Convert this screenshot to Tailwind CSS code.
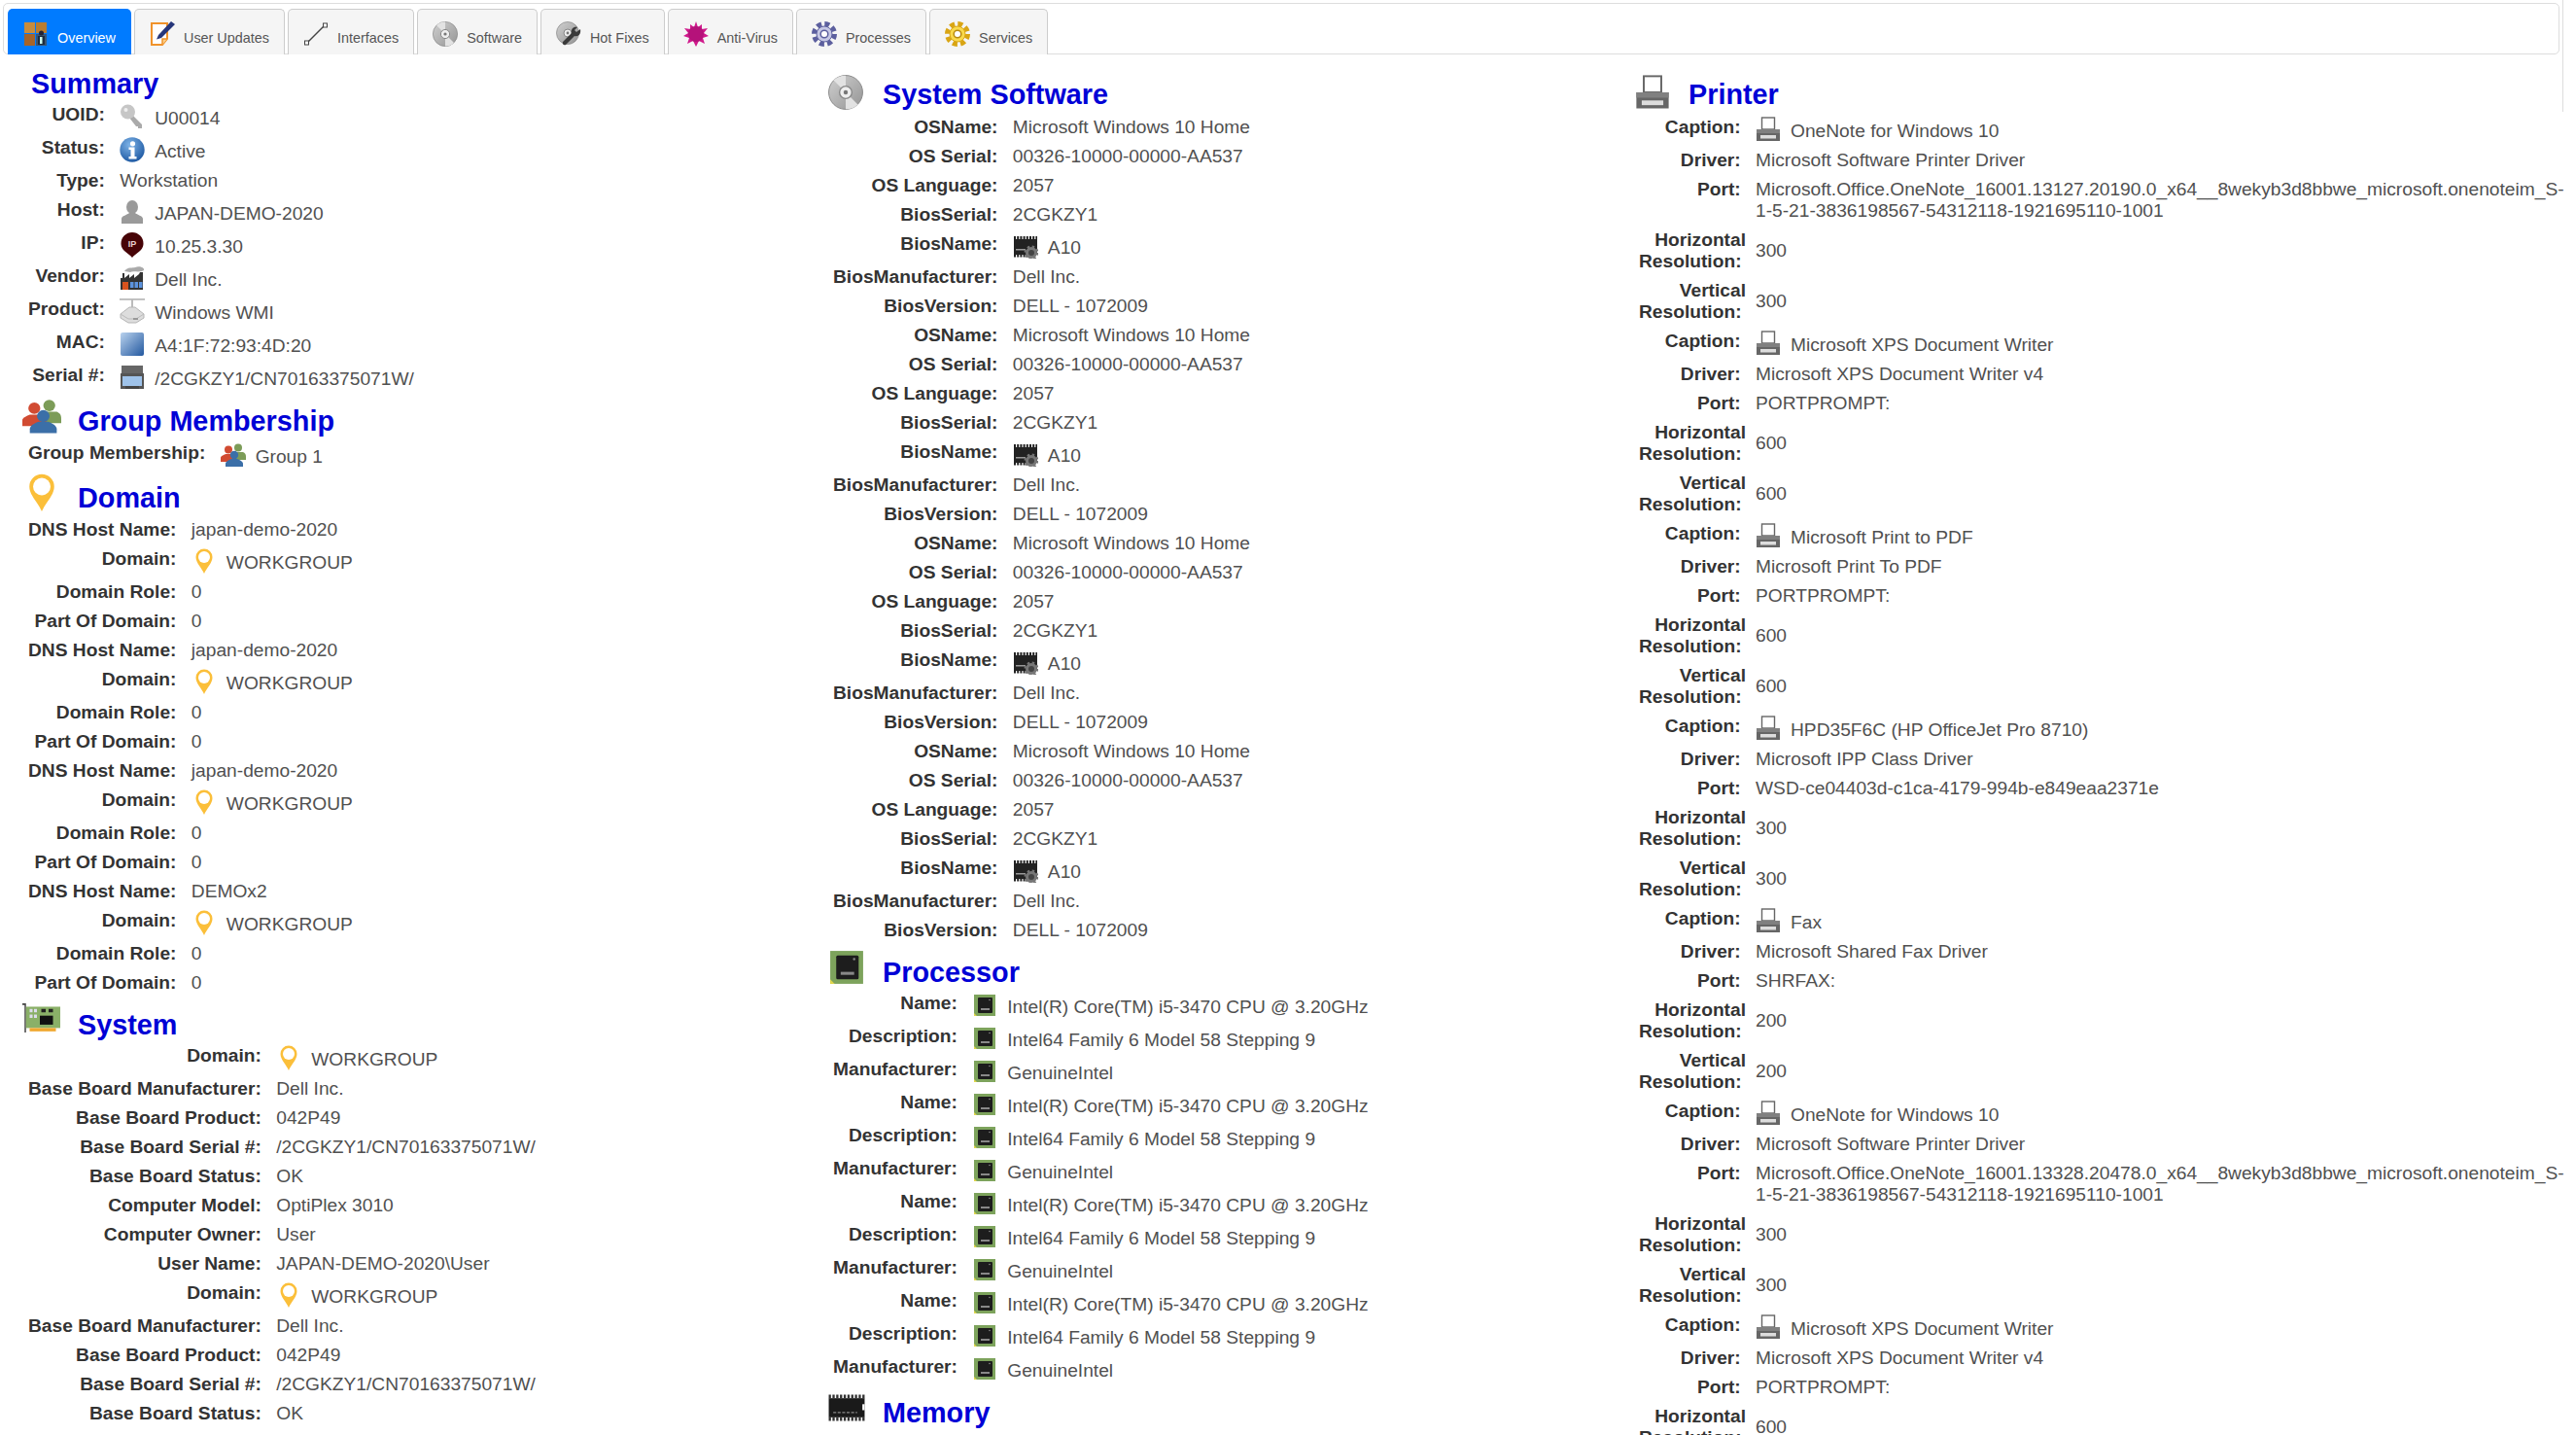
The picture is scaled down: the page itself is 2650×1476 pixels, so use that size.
<!DOCTYPE html>
<html lang="en">
<head>
  <meta charset="UTF-8" />
  <meta name="viewport" content="width=device-width, initial-scale=1.0" />
  <title>Device Overview</title>
  <script src="https://cdn.jsdelivr.net/npm/@tailwindcss/browser@4"></script>
</head>
<body class="bg-white h-screen overflow-hidden font-['Liberation_Sans',Arial,sans-serif] text-[19.2px] leading-[22px] text-[#505050]">
  <!-- icon sheet -->
  <svg class="absolute w-0 h-0" xmlns="http://www.w3.org/2000/svg">
    <defs>
      <radialGradient id="infoFill" cx="40%" cy="30%" r="80%"><stop offset="0" stop-color="#7fb4e8"/><stop offset="1" stop-color="#14509c"/></radialGradient>
      <linearGradient id="macFill" x1="0" y1="0" x2="1" y2="1"><stop offset="0" stop-color="#b9d2ee"/><stop offset="1" stop-color="#23589f"/></linearGradient>
      <linearGradient id="discFill" x1="0" y1="0" x2="1" y2="1"><stop offset="0" stop-color="#d0d0d0"/><stop offset="1" stop-color="#949494"/></linearGradient>
    </defs>
    <symbol id="key" viewBox="0 0 26 26">
      <path d="M14 12 L23 21 V25 H19 V23 H17 L10 14" fill="#aaa"/>
      <circle cx="8.5" cy="8" r="7.5" fill="#c6c6c6"/><circle cx="6.5" cy="6" r="2" fill="#eee"/>
    </symbol>
    <symbol id="info" viewBox="0 0 26 26">
      <circle cx="13" cy="13" r="12.7" fill="url(#infoFill)"/>
      <circle cx="13.5" cy="6.8" r="2.6" fill="#fff"/>
      <path d="M9.5 10.5H15.5V20H17.5V22.5H9.5V20H11.5V13H9.5Z" fill="#fff"/>
    </symbol>
    <symbol id="user" viewBox="0 0 26 26">
      <ellipse cx="13" cy="8" rx="6" ry="7" fill="#9a9a9a"/>
      <path d="M2 25V20C2 17 8 16 10 14H16C18 16 24 17 24 20V25Z" fill="#9a9a9a"/>
    </symbol>
    <symbol id="ip" viewBox="0 0 26 26">
      <path d="M13 26C9 21 1.5 19 1.5 11.5A11.5 11.5 0 0 1 24.5 11.5C24.5 19 17 21 13 26Z" fill="#470407"/>
      <text x="13" y="14.5" text-anchor="middle" font-size="9" font-weight="700" fill="#e8d0d0" font-family="Liberation Sans">IP</text>
    </symbol>
    <symbol id="factory" viewBox="0 0 26 26">
      <path d="M5 6C8 1 14 3 16 2C20 0 26 2 25 5C20 8 14 5 11 7Z" fill="#aaa"/>
      <path d="M3 8H5V13L10 9V13L15 9V13L20 9L21 7H24V25H1V13H3Z" fill="#333"/>
      <rect x="3" y="17" width="6" height="8" fill="#d9531e"/><rect x="11" y="17" width="3.5" height="6" fill="#5c93de"/><rect x="15.5" y="17" width="3.5" height="6" fill="#5c93de"/><rect x="20" y="17" width="3.5" height="6" fill="#5c93de"/>
    </symbol>
    <symbol id="device" viewBox="0 0 26 26">
      <rect x="0" y="0" width="26" height="1.8" fill="#bbb"/><rect x="12" y="1" width="2" height="9" fill="#bbb"/>
      <path d="M1 16L10 9H16L25 16V20L17 25H9L1 20Z" fill="#ddd" stroke="#b5b5b5"/>
      <path d="M1 16L9 21H17L25 16" fill="none" stroke="#bbb"/><rect x="14" y="20" width="5" height="2" fill="#999"/>
    </symbol>
    <symbol id="mac" viewBox="0 0 26 26"><rect x="1" y="1" width="24" height="24" rx="2" fill="url(#macFill)"/></symbol>
    <symbol id="serial" viewBox="0 0 26 26">
      <path d="M2 1H24V12H2Z" fill="#666"/><rect x="1" y="9" width="24" height="16" fill="#555"/>
      <rect x="3" y="12" width="20" height="10" fill="#9fc3ea"/><rect x="6" y="22" width="14" height="3" fill="#444"/>
    </symbol>
    <symbol id="group" viewBox="0 0 26 26" preserveAspectRatio="none">
      <circle cx="18" cy="5.5" r="4" fill="#7c9c58"/><path d="M13 15V10H23C25 11 26 12 26 15V18H17Z" fill="#7c9c58"/>
      <circle cx="8" cy="7.5" r="4" fill="#d14b32"/><path d="M0 20V16C0 14 3 13 5 12H12C14 13 16 14 16 16V20Z" fill="#d14b32"/>
      <circle cx="14" cy="13" r="4.2" fill="#3b6fa8"/><path d="M5 25V22C5 20 8 18 11 17H17C20 18 23 20 23 22V25Z" fill="#3b6fa8"/>
    </symbol>
    <symbol id="pin" viewBox="0 0 26 26">
      <path d="M13 26C10.5 20 4.5 15 4.5 9A8.5 8.5 0 0 1 21.5 9C21.5 15 15.5 20 13 26Z" fill="#fbbf3a"/>
      <circle cx="13" cy="9" r="6" fill="#fff"/>
    </symbol>
    <symbol id="biosChip" viewBox="0 0 26 26">
      <path d="M1 6H25V22H1Z" fill="#222"/>
      <path d="M1 4.5H25" stroke="#222" stroke-width="3" stroke-dasharray="2 1.2"/>
      <path d="M1 23H17" stroke="#222" stroke-width="3" stroke-dasharray="2 1.2"/>
      <rect x="3" y="16" width="10" height="1.5" fill="#999"/>
      <circle cx="19" cy="20" r="4.5" fill="#444" stroke="#777" stroke-width="3"/>
      <circle cx="19" cy="20" r="6.5" fill="none" stroke="#777" stroke-width="2" stroke-dasharray="2.5 2.6"/>
    </symbol>
    <symbol id="cpu" viewBox="0 0 26 26">
      <rect x="2" y="2" width="22" height="22" fill="#7da35c"/>
      <rect x="6" y="5" width="15" height="16" rx="1" fill="#1d1d1d"/>
      <rect x="9" y="16" width="9" height="2" fill="#888"/><circle cx="18" cy="7.5" r="0.8" fill="#888"/>
      <path d="M2 24L2 21L5 24Z" fill="#e0d64b"/>
    </symbol>
    <symbol id="printer" viewBox="0 0 26 26">
      <rect x="6.5" y="1" width="13" height="12" fill="#fff" stroke="#666" stroke-width="1.4"/>
      <path d="M1 13H25V25H1Z" fill="#666"/><path d="M1 13H25V17H1Z" fill="#808080"/>
      <rect x="5" y="19" width="16" height="3.5" fill="#ddd"/>
    </symbol>
    <symbol id="memory" viewBox="0 0 26 26" preserveAspectRatio="none">
      <rect x="1" y="5" width="24" height="16" fill="#1a1a1a"/>
      <path d="M1 3.5H25M1 22.5H25" stroke="#333" stroke-width="3" stroke-dasharray="1.5 1"/>
      <path d="M4 17H20" stroke="#888" stroke-width="1" stroke-dasharray="2 1"/>
      <path d="M25 10V15H23.5V10Z" fill="#fff"/>
    </symbol>
    <symbol id="disc" viewBox="0 0 26 26">
      <circle cx="13" cy="13" r="12.6" fill="url(#discFill)" stroke="#888" stroke-width=".7"/>
      <path d="M13 13L4 4A12.6 12.6 0 0 1 13 .5Z" fill="#e2e2e2"/><path d="M13 13L22 22A12.6 12.6 0 0 1 13 25.5Z" fill="#e2e2e2"/>
      <circle cx="13" cy="13" r="4.6" fill="#eee" stroke="#888"/><circle cx="13" cy="13" r="1.6" fill="#777"/>
    </symbol>
    <symbol id="board" viewBox="0 0 26 26" preserveAspectRatio="none">
      <path d="M0 0H2.5V26H1.5V1.5H0Z" fill="#444"/>
      <rect x="2.5" y="3" width="23.5" height="19" fill="#8ab068"/>
      <rect x="5" y="5" width="2" height="3" fill="#dde"/><rect x="5" y="10" width="2" height="3" fill="#dde"/><rect x="8" y="5" width="2" height="3" fill="#dde"/><rect x="8" y="10" width="2" height="3" fill="#dde"/>
      <rect x="13" y="5" width="3" height="3" fill="#222"/><rect x="18" y="5" width="3" height="3" fill="#222"/><rect x="12" y="11" width="9" height="8" fill="#111"/>
      <rect x="5" y="22" width="18" height="3" fill="#f0a830"/>
    </symbol>
    <symbol id="boxes" viewBox="0 0 26 26">
      <rect x="1" y="1" width="11" height="11" fill="#c88c3c"/><rect x="13" y="1" width="11" height="11" fill="#b97d30"/>
      <rect x="1" y="13" width="11" height="12" fill="#a5642a"/><rect x="13" y="13" width="11" height="12" fill="#3a5674"/>
      <circle cx="18.5" cy="12" r="2.5" fill="#223"/><rect x="15" y="15" width="7" height="9" fill="#1c2c40"/><rect x="17" y="16" width="2.5" height="7" fill="#cfe"/>
    </symbol>
    <symbol id="pen" viewBox="0 0 26 26">
      <path d="M2 2H18V18L13 24H2Z" fill="#fff" stroke="#f0932b" stroke-width="2"/>
      <path d="M13 24V18H18" fill="#fbd089" stroke="#f0932b" stroke-width="1.5"/>
      <path d="M22 0L26 3L12 17L7 18.5L9 14Z" fill="#26367a"/>
    </symbol>
    <symbol id="link" viewBox="0 0 26 26">
      <path d="M5 21L21 5" stroke="#444" stroke-width="1.5"/>
      <rect x="1.5" y="20" width="4" height="4" fill="#fff" stroke="#444"/><rect x="20.5" y="2" width="4" height="4" fill="#fff" stroke="#444"/>
    </symbol>
    <symbol id="discWrench" viewBox="0 0 26 26">
      <circle cx="12" cy="12" r="11.5" fill="url(#discFill)" stroke="#888" stroke-width=".7"/>
      <circle cx="12" cy="12" r="4" fill="#eee" stroke="#888"/><circle cx="12" cy="12" r="1.4" fill="#777"/>
      <path d="M25 8L21 11L19 9L22 6C18 5 15 8 16 12L7 21C6 23 8 25 10 24L19 15C23 16 26 13 25 8Z" fill="#3a3a3a"/>
    </symbol>
    <symbol id="virus" viewBox="0 0 26 26">
      <path d="M13 0L15 6L19 3L19 8L25 7L21 12L26 15L20 17L22 23L16 20L13 26L10 20L4 23L6 17L0 15L5 12L1 7L7 8L7 3L11 6Z" fill="#d01a8c"/>
      <circle cx="13" cy="13" r="8" fill="#b5127a"/>
    </symbol>
    <symbol id="gearBlue" viewBox="0 0 26 26">
      <circle cx="13" cy="13" r="10.5" fill="none" stroke="#5c5f9e" stroke-width="5" stroke-dasharray="5 3.25"/>
      <circle cx="13" cy="13" r="8" fill="#c5c7e4" stroke="#5c5f9e" stroke-width="1"/>
      <circle cx="13" cy="13" r="3.8" fill="#fff" stroke="#5c5f9e" stroke-width="1.5"/>
    </symbol>
    <symbol id="gearGold" viewBox="0 0 26 26">
      <circle cx="13" cy="13" r="10.5" fill="none" stroke="#d9a514" stroke-width="5" stroke-dasharray="5 3.25"/>
      <circle cx="13" cy="13" r="8" fill="#f9d94c" stroke="#d9a514" stroke-width="1"/>
      <circle cx="13" cy="13" r="3.8" fill="#fff" stroke="#b88a10" stroke-width="1.5"/>
    </symbol>
  </svg>

  <div class="absolute left-[2636px] top-0 h-[115px] w-px bg-[#ddd]"></div>

  <nav class="ml-[3px] mt-[3px] w-[2630px] h-[53px] border border-[#ddd] rounded-[5px] pt-[5px] pl-[4px] flex gap-[3px] text-[14.4px] text-[#555]">
    <a class="h-[47px] flex pl-[16px] pr-[16px] rounded-t-[5px] bg-[#007bff] text-white"><svg class="w-[26px] h-[26px] mt-[13px] mr-[9px]"><use href="#boxes"/></svg><span class="pt-[19px]">Overview</span></a>
    <a class="h-[47px] flex pl-[15px] pr-[15px] rounded-t-[5px] bg-[#f5f5f5] border border-b-0 border-[#ccc]"><svg class="w-[26px] h-[26px] mt-[12px] mr-[9px]"><use href="#pen"/></svg><span class="pt-[18px]">User Updates</span></a>
    <a class="h-[47px] flex pl-[15px] pr-[15px] rounded-t-[5px] bg-[#f5f5f5] border border-b-0 border-[#ccc]"><svg class="w-[26px] h-[26px] mt-[12px] mr-[9px]"><use href="#link"/></svg><span class="pt-[18px]">Interfaces</span></a>
    <a class="h-[47px] flex pl-[15px] pr-[15px] rounded-t-[5px] bg-[#f5f5f5] border border-b-0 border-[#ccc]"><svg class="w-[26px] h-[26px] mt-[12px] mr-[9px]"><use href="#disc"/></svg><span class="pt-[18px]">Software</span></a>
    <a class="h-[47px] flex pl-[15px] pr-[15px] rounded-t-[5px] bg-[#f5f5f5] border border-b-0 border-[#ccc]"><svg class="w-[26px] h-[26px] mt-[12px] mr-[9px]"><use href="#discWrench"/></svg><span class="pt-[18px]">Hot Fixes</span></a>
    <a class="h-[47px] flex pl-[15px] pr-[15px] rounded-t-[5px] bg-[#f5f5f5] border border-b-0 border-[#ccc]"><svg class="w-[26px] h-[26px] mt-[12px] mr-[9px]"><use href="#virus"/></svg><span class="pt-[18px]">Anti-Virus</span></a>
    <a class="h-[47px] flex pl-[15px] pr-[15px] rounded-t-[5px] bg-[#f5f5f5] border border-b-0 border-[#ccc]"><svg class="w-[26px] h-[26px] mt-[12px] mr-[9px]"><use href="#gearBlue"/></svg><span class="pt-[18px]">Processes</span></a>
    <a class="h-[47px] flex pl-[15px] pr-[15px] rounded-t-[5px] bg-[#f5f5f5] border border-b-0 border-[#ccc]"><svg class="w-[26px] h-[26px] mt-[12px] mr-[9px]"><use href="#gearGold"/></svg><span class="pt-[18px]">Services</span></a>
  </nav>

  <main class="grid grid-cols-[828px_830px_1fr] pl-[23px]">
    <div id="col1"></div>
    <div id="col2"></div>
    <div id="col3"></div>
  </main>

  <script>
    const heading = (title, icon, box, pad) => `
      <div class="flex items-center ${pad}">
        ${icon ? `<svg class="${box} shrink-0"><use href="#${icon}"/></svg>` : ''}
        <h2 class="font-bold text-[28.8px] leading-[34px] text-[#0000d6]">${title}</h2>
      </div>`;

    const row = ([label, value, icon]) => {
      if (icon) {
        return `<tr class="h-[34px]">
          <td class="align-top text-right font-bold text-[#333] pt-[5px] pb-[3px] pr-[10px]">${label}:&nbsp;</td>
          <td class="align-top p-0"><div class="flex"><svg class="w-[26px] h-[26px] mt-[5px] mr-[10px] shrink-0"><use href="#${icon}"/></svg><span class="mt-[9px]">${value}</span></div></td>
        </tr>`;
      }
      return `<tr>
        <td class="align-top text-right font-bold text-[#333] pt-[5px] pb-[3px] pr-[10px]">${label}:&nbsp;</td>
        <td class="align-middle pt-[5px] pb-[3px]">${value}</td>
      </tr>`;
    };

    const table = (rows) => `<table class="ml-[6px] whitespace-nowrap border-collapse"><tbody>${rows.map(row).join('')}</tbody></table>`;

    const printerTable = (rows) => `<table class="ml-[5px] w-[956px] table-fixed border-collapse"><colgroup><col class="w-[120px]"></colgroup><tbody>${rows.map(row).join('')}</tbody></table>`;

    const repeat = (rows, n) => Array.from({ length: n }).flatMap(() => rows);

    const domainRows = (host) => [
      ['DNS Host Name', host],
      ['Domain', 'WORKGROUP', 'pin'],
      ['Domain Role', '0'],
      ['Part Of Domain', '0'],
    ];

    const boardRows = [
      ['Domain', 'WORKGROUP', 'pin'],
      ['Base Board Manufacturer', 'Dell Inc.'],
      ['Base Board Product', '042P49'],
      ['Base Board Serial #', '/2CGKZY1/CN70163375071W/'],
      ['Base Board Status', 'OK'],
    ];

    const softwareRows = [
      ['OSName', 'Microsoft Windows 10 Home'],
      ['OS Serial', '00326-10000-00000-AA537'],
      ['OS Language', '2057'],
      ['BiosSerial', '2CGKZY1'],
      ['BiosName', 'A10', 'biosChip'],
      ['BiosManufacturer', 'Dell Inc.'],
      ['BiosVersion', 'DELL - 1072009'],
    ];

    const cpuRows = [
      ['Name', 'Intel(R) Core(TM) i5-3470 CPU @ 3.20GHz', 'cpu'],
      ['Description', 'Intel64 Family 6 Model 58 Stepping 9', 'cpu'],
      ['Manufacturer', 'GenuineIntel', 'cpu'],
    ];

    const printerRows = (caption, driver, port, h, v) => [
      ['Caption', caption, 'printer'],
      ['Driver', driver],
      ['Port', port],
      ['Horizontal Resolution', h],
      ['Vertical Resolution', v],
    ];

    document.getElementById('col1').innerHTML =
      heading('Summary', null, '', 'h-[46px] pt-[14px] pl-[9px]') +
      table([
        ['UOID', 'U00014', 'key'],
        ['Status', 'Active', 'info'],
        ['Type', 'Workstation'],
        ['Host', 'JAPAN-DEMO-2020', 'user'],
        ['IP', '10.25.3.30', 'ip'],
        ['Vendor', 'Dell Inc.', 'factory'],
        ['Product', 'Windows WMI', 'device'],
        ['MAC', 'A4:1F:72:93:4D:20', 'mac'],
        ['Serial #', '/2CGKZY1/CN70163375071W/', 'serial'],
      ]) +
      heading('Group Membership', 'group', 'w-[40px] h-[38px] mr-[17px] -mt-[11px]', 'h-[46px] pt-[12px]') +
      table([['Group Membership', 'Group 1', 'group']]) +
      heading('Domain', 'pin', 'w-[40px] h-[39px] mr-[17px] -mt-[11px]', 'h-[45px] pt-[11px]') +
      table([...domainRows('japan-demo-2020'), ...domainRows('japan-demo-2020'), ...domainRows('japan-demo-2020'), ...domainRows('DEMOx2')]) +
      heading('System', 'board', 'w-[39px] h-[30px] mr-[18px] -mt-[14px]', 'h-[45px] pt-[13px]') +
      table([
        ...boardRows,
        ['Computer Model', 'OptiPlex 3010'],
        ['Computer Owner', 'User'],
        ['User Name', 'JAPAN-DEMO-2020\\User'],
        ...boardRows,
      ]);

    document.getElementById('col2').innerHTML =
      heading('System Software', 'disc', 'w-[36px] h-[36px] mr-[20px] -mt-[4px] ml-[1px]', 'h-[59px] pt-[23px]') +
      table(repeat(softwareRows, 4)) +
      heading('Processor', 'cpu', 'w-[40px] h-[40px] mr-[17px] -mt-[10px]', 'h-[45px] pt-[13px]') +
      table(repeat(cpuRows, 4)) +
      heading('Memory', 'memory', 'w-[40px] h-[32px] mr-[17px] -mt-[10px]', 'h-[45px] pt-[13px]');

    const xps = printerRows('Microsoft XPS Document Writer', 'Microsoft XPS Document Writer v4', 'PORTPROMPT:', '600', '600');

    document.getElementById('col3').innerHTML =
      heading('Printer', 'printer', 'w-[38px] h-[36px] mr-[18px] -mt-[4px]', 'h-[59px] pt-[23px]') +
      printerTable([
        ...printerRows('OneNote for Windows 10', 'Microsoft Software Printer Driver', 'Microsoft.Office.OneNote_16001.13127.20190.0_x64__8wekyb3d8bbwe_microsoft.onenoteim_S-1-5-21-3836198567-54312118-1921695110-1001', '300', '300'),
        ...xps,
        ...printerRows('Microsoft Print to PDF', 'Microsoft Print To PDF', 'PORTPROMPT:', '600', '600'),
        ...printerRows('HPD35F6C (HP OfficeJet Pro 8710)', 'Microsoft IPP Class Driver', 'WSD-ce04403d-c1ca-4179-994b-e849eaa2371e', '300', '300'),
        ...printerRows('Fax', 'Microsoft Shared Fax Driver', 'SHRFAX:', '200', '200'),
        ...printerRows('OneNote for Windows 10', 'Microsoft Software Printer Driver', 'Microsoft.Office.OneNote_16001.13328.20478.0_x64__8wekyb3d8bbwe_microsoft.onenoteim_S-1-5-21-3836198567-54312118-1921695110-1001', '300', '300'),
        ...xps,
      ]);
  </script>
</body>
</html>
